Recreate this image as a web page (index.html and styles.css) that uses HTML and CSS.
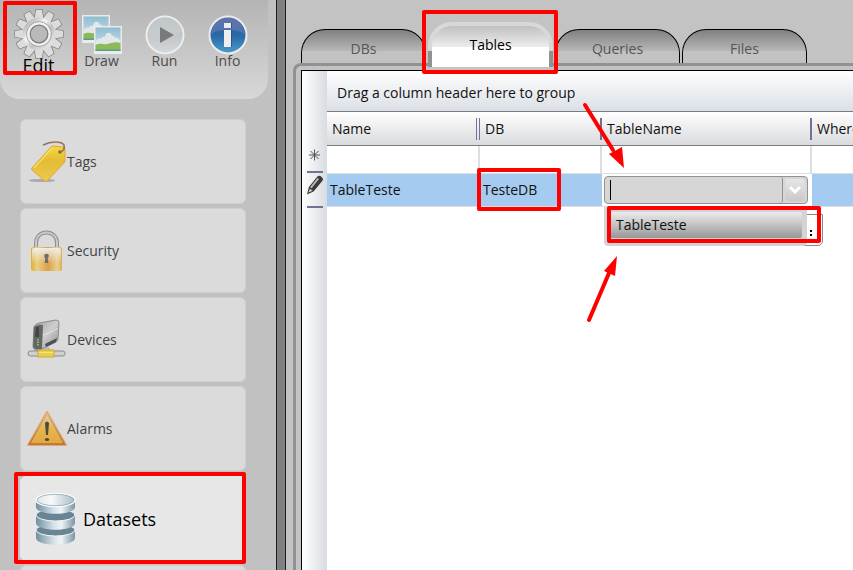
FILE: index.html
```html
<!DOCTYPE html>
<html lang="en">
<head>
  <meta charset="UTF-8" />
  <meta name="viewport" content="width=device-width, initial-scale=1.0" />
  <title>Datasets - Tables</title>
  <link rel="stylesheet" href="styles.css">
</head>
<body>
  <aside class="sidebar">
    <div class="toolbar">
      <button class="tool active">
        <svg width="50" height="50" viewBox="-25 -25 50 50" aria-hidden="true">
          <defs>
            <linearGradient id="metal" x1="0" y1="0" x2="1" y2="1">
              <stop offset="0" stop-color="#b5b5b5" />
              <stop offset=".35" stop-color="#f4f4f4" />
              <stop offset=".6" stop-color="#c2c2c2" />
              <stop offset="1" stop-color="#e6e6e6" />
            </linearGradient>
            <path id="tooth" d="M-4.4 -15 L-3 -24.2 H3 L4.4 -15 Z" />
            <g id="teeth">
              <use href="#tooth" /><use href="#tooth" transform="rotate(30)" />
              <use href="#tooth" transform="rotate(60)" /><use href="#tooth" transform="rotate(90)" />
              <use href="#tooth" transform="rotate(120)" /><use href="#tooth" transform="rotate(150)" />
              <use href="#tooth" transform="rotate(180)" /><use href="#tooth" transform="rotate(210)" />
              <use href="#tooth" transform="rotate(240)" /><use href="#tooth" transform="rotate(270)" />
              <use href="#tooth" transform="rotate(300)" /><use href="#tooth" transform="rotate(330)" />
            </g>
          </defs>
          <use href="#teeth" fill="#d8d8d8" stroke="#7c7c7c" stroke-width="1.4" />
          <circle r="12" fill="none" stroke="#7c7c7c" stroke-width="9.6" />
          <use href="#teeth" fill="#dcdcdc" />
          <circle r="12" fill="none" stroke="url(#metal)" stroke-width="8.4" />
          <circle r="12.4" fill="none" stroke="#a5a5a5" stroke-width="1" />
          <circle r="10.6" fill="none" stroke="#f1f1f1" stroke-width="2" />
          <circle r="8.8" fill="#b9b9b9" stroke="#7c7c7c" stroke-width="1.2" />
        </svg>
        <span class="tool-label">Edit</span>
        <span class="mark mark-edit"></span>
      </button>
      <button class="tool">
        <svg width="40" height="40" viewBox="0 0 40 40" aria-hidden="true">
          <defs>
            <linearGradient id="sky" x1="0" y1="0" x2="0" y2="1">
              <stop offset="0" stop-color="#8fbcd2" />
              <stop offset="1" stop-color="#d3e5ec" />
            </linearGradient>
            <g id="photo">
              <path fill="#ebebeb" d="M0 0H28V28H0Z" />
              <path fill="url(#sky)" d="M1.5 1.5H26.5V25H1.5Z" />
              <path fill="#e2e7ea" d="M2 15c1-3 4-3 5-2 1-3 3-2 4-2 0-5 6-6 7-1 2-1 3 1 3 2 2-1 4 0 5 3v4H2Z" />
              <path fill="#8cba58" d="M1.5 19c4-3 9 0 12-1s8-3 13-1v8h-25Z" />
              <path fill="#55a08a" d="M1.5 23.5h25v1.5h-25Z" />
            </g>
          </defs>
          <use href="#photo" />
          <use href="#photo" x="12" y="11" />
        </svg>
        <span class="tool-label">Draw</span>
      </button>
      <button class="tool">
        <svg width="40" height="40" viewBox="0 0 40 40" aria-hidden="true">
          <defs>
            <linearGradient id="silver" x1="0" y1="0" x2="0" y2="1">
              <stop offset="0" stop-color="#aeb4b9" />
              <stop offset="1" stop-color="#d5d8da" />
            </linearGradient>
          </defs>
          <circle cx="20" cy="20" r="18.5" fill="url(#silver)" stroke="#ececec" stroke-width="2" />
          <path d="M3 18C8 25 31 26 37 15C36 8 29 3 20 3S4 9 3 18Z" fill="#c9cdd0" opacity=".7" />
          <path d="M15 12L29 20L15 28Z" fill="#777b7e" />
        </svg>
        <span class="tool-label">Run</span>
      </button>
      <button class="tool">
        <svg width="40" height="40" viewBox="0 0 40 40" aria-hidden="true">
          <defs>
            <linearGradient id="blue" x1="0" y1="0" x2="0" y2="1">
              <stop offset="0" stop-color="#5560a0" />
              <stop offset=".5" stop-color="#2868a6" />
              <stop offset="1" stop-color="#4b9dcb" />
            </linearGradient>
          </defs>
          <circle cx="20" cy="20" r="18.5" fill="url(#blue)" stroke="#ececec" stroke-width="2" />
          <path d="M3 20C8 13 31 13 37 20C36 9 29 3 20 3S4 9 3 20Z" fill="#8194c4" opacity=".35" />
          <path d="M17 8h7v5h-7ZM17 15h7v17h-7Z" fill="#3e4a92" />
          <path d="M16 8h7v5h-7ZM16 15h7v17h-7Z" fill="#eeeeee" />
        </svg>
        <span class="tool-label">Info</span>
      </button>
    </div>

    <nav class="menu">
      <a class="menu-item" href="#tags">
        <svg width="40" height="42" viewBox="0 0 40 42" aria-hidden="true">
          <defs>
            <linearGradient id="tagFill" x1="0" y1="0" x2="0" y2="1">
              <stop offset="0" stop-color="#f0dc3a" />
              <stop offset=".4" stop-color="#e6bc35" />
              <stop offset="1" stop-color="#eacb4c" />
            </linearGradient>
          </defs>
          <ellipse cx="15" cy="39.5" rx="13" ry="1.6" fill="#aaaaaa" />
          <path d="M5 27L24 6Q25 5 27 5L35 6Q38 6 38 8V19Q38 21 37 22L20 40Q19 41 18 40L5 29Q4 28 5 27Z" fill="url(#tagFill)" stroke="#e9a23b" />
          <path d="M7 27L25 7" stroke="#f4e06a" stroke-width="1.2" />
          <circle cx="33" cy="11" r="1.8" fill="#8a6030" />
          <path d="M16 4C24 0 34 0 37 4C38 8 37 10 33 11" fill="none" stroke="#94745e" stroke-width="1.6" />
        </svg>
        Tags
      </a>
      <a class="menu-item" href="#security">
        <svg width="40" height="42" viewBox="0 0 40 42" aria-hidden="true">
          <defs>
            <linearGradient id="gold" x1="0" y1="0" x2="1" y2="0">
              <stop offset="0" stop-color="#e2b036" />
              <stop offset=".2" stop-color="#ebcf82" />
              <stop offset=".55" stop-color="#dda04a" />
              <stop offset=".85" stop-color="#e9cf90" />
              <stop offset="1" stop-color="#dcae49" />
            </linearGradient>
            <linearGradient id="shine" x1="0" y1="0" x2="0" y2="1">
              <stop offset="0" stop-color="#eeeeea" />
              <stop offset="1" stop-color="#eeeeea" stop-opacity="0" />
            </linearGradient>
          </defs>
          <path d="M9 20V13C9 -1 30 -1 30 13V20" fill="none" stroke="#8f8f8f" stroke-width="4" />
          <path d="M9 20V13C9 -1 30 -1 30 13V20" fill="none" stroke="#c9c9c9" stroke-width="2" />
          <rect x="4" y="17" width="31" height="24" rx="2" fill="url(#gold)" />
          <rect x="5" y="18" width="29" height="15" rx="2" fill="url(#shine)" />
          <circle cx="19.5" cy="26" r="2.3" fill="#6d6d6d" />
          <path d="M18.5 26h2l.8 7h-3.6Z" fill="#6d6d6d" />
        </svg>
        Security
      </a>
      <a class="menu-item" href="#devices">
        <svg width="40" height="42" viewBox="0 0 40 42" aria-hidden="true">
          <defs>
            <linearGradient id="steel" x1="0" y1="0" x2="1" y2="1">
              <stop offset="0" stop-color="#9b9b9b" />
              <stop offset=".5" stop-color="#cecece" />
              <stop offset="1" stop-color="#8a8a8a" />
            </linearGradient>
          </defs>
          <path d="M7 8Q8 5 12 4L29 1Q32 1 32 4L31 20Q31 22 29 23L15 30Q7 33 6 28Z" fill="url(#steel)" stroke="#8d8d8d" />
          <path d="M7 8Q11 5 16 6L15 30Q7 32 6 27Z" fill="#666666" />
          <path d="M9 8h3v10H8Z" fill="#444444" />
          <path d="M16 16Q24 14 31 9" stroke="#e2e2e2" fill="none" />
          <path d="M18 25L30 19L29 23L19 28Z" fill="#505050" />
          <path d="M11 20v7" stroke="#63cf4f" stroke-width="2" stroke-dasharray="1.5 1" />
          <path d="M17 29h5v4h-5Z" fill="#cccccc" stroke="#999999" stroke-width=".6" />
          <rect x="1" y="32" width="37" height="5" rx="2.5" fill="#cfcfcf" stroke="#8b8b8b" />
          <rect x="11" y="31" width="16" height="7" fill="#e9cf45" stroke="#d0a93a" />
          <path d="M12 33.5h14" stroke="#f3e48a" />
        </svg>
        Devices
      </a>
      <a class="menu-item" href="#alarms">
        <svg width="40" height="42" viewBox="0 0 40 42" aria-hidden="true">
          <defs>
            <linearGradient id="amber" x1="0" y1="0" x2="0" y2="1">
              <stop offset="0" stop-color="#e6cfa8" />
              <stop offset=".5" stop-color="#e4b74f" />
              <stop offset="1" stop-color="#e2a83c" />
            </linearGradient>
            <linearGradient id="rust" x1="0" y1="0" x2="0" y2="1">
              <stop offset="0" stop-color="#dcb09a" />
              <stop offset="1" stop-color="#b06a40" />
            </linearGradient>
          </defs>
          <path d="M20 4L39 37H1Z" fill="url(#amber)" stroke="#e2a860" stroke-width="2" stroke-linejoin="round" />
          <path d="M20 5.5L37.5 36H2.5Z" fill="none" stroke="url(#rust)" stroke-width="1.3" />
          <path d="M18 15Q20 12 22 15L21 27H19Z" fill="#4e4a3c" />
          <ellipse cx="20" cy="31.5" rx="2.2" ry="1.6" fill="#4e4a3c" />
        </svg>
        Alarms
      </a>
      <a class="menu-item selected" href="#datasets">
        <svg width="42" height="54" viewBox="0 0 42 54" aria-hidden="true">
          <defs>
            <linearGradient id="drum" x1="0" y1="0" x2="1" y2="0">
              <stop offset="0" stop-color="#6f8fa2" />
              <stop offset=".45" stop-color="#d5e1e8" />
              <stop offset=".65" stop-color="#eef4f7" />
              <stop offset="1" stop-color="#7896a8" />
            </linearGradient>
            <linearGradient id="lid" x1="0" y1="0" x2="1" y2="0">
              <stop offset="0" stop-color="#dfe7ec" />
              <stop offset=".4" stop-color="#f6f9fa" />
              <stop offset="1" stop-color="#a7bac6" />
            </linearGradient>
          </defs>
          <path d="M1 38V46C1 55 40 55 40 46V38Z" fill="url(#drum)" />
          <ellipse cx="20.5" cy="38" rx="19.5" ry="6" fill="#6b8494" stroke="#f2f6f8" />
          <path d="M1 23V31C1 40 40 40 40 31V23Z" fill="url(#drum)" />
          <ellipse cx="20.5" cy="23" rx="19.5" ry="6" fill="#6b8494" stroke="#f2f6f8" />
          <path d="M1 8V15C1 24 40 24 40 15V8Z" fill="url(#drum)" />
          <ellipse cx="20.5" cy="8" rx="19.5" ry="6.5" fill="url(#lid)" stroke="#ffffff" stroke-width="1.5" />
          <ellipse cx="20.5" cy="8" rx="18.5" ry="5.7" fill="none" stroke="#8299a7" stroke-width=".7" />
        </svg>
        Datasets
        <span class="mark mark-datasets"></span>
      </a>
      <a class="menu-item" href="#more" aria-label="More"></a>
    </nav>
  </aside>

  <div class="splitter"></div>

  <main class="main">
    <div class="tabs" role="tablist">
      <button class="tab" role="tab">DBs</button>
      <button class="tab active" role="tab" aria-selected="true">Tables<span class="mark mark-tab"></span></button>
      <button class="tab" role="tab">Queries</button>
      <button class="tab" role="tab">Files</button>
    </div>

    <div class="frame">
      <div class="panel">
        <!-- row state icons -->
        <div class="indicators">
          <svg class="new-row" width="15" height="15" viewBox="0 0 15 15" aria-hidden="true">
            <path d="M7.5 1.5v11M2 7h11M3.5 3l8 8M11.5 3l-8 8" stroke="#555555" />
          </svg>
          <svg class="edit-row" width="17" height="20" viewBox="0 0 17 20" aria-hidden="true">
            <path d="M0 20L2 12L11 1Q14 -1 16 2Q18 4 16 6L7 17Z" fill="#3a3a3a" />
            <path d="M4 13L12 3" stroke="#b5b5b5" stroke-width="2" />
            <path d="M1.5 18L3 14L6 16Z" fill="#cfcfcf" />
          </svg>
        </div>

        <div class="grid">
          <div class="group-bar">Drag a column header here to group</div>
          <table class="rows">
            <colgroup>
              <col class="col-name"><col class="col-db"><col class="col-table"><col class="col-where">
            </colgroup>
            <thead>
              <tr>
                <th class="double"><span>Name</span></th>
                <th><span>DB</span></th>
                <th><span>TableName</span></th>
                <th><span>Where</span></th>
              </tr>
            </thead>
            <tbody>
              <tr class="blank"><td></td><td></td><td></td><td></td></tr>
              <tr class="current">
                <td>TableTeste</td>
                <td>TesteDB<span class="mark mark-db"></span></td>
                <td class="editing">
                  <div class="combo">
                    <input class="combo-input" type="text" aria-label="TableName">
                    <span class="caret"></span>
                    <button class="combo-button" aria-label="Open list">
                      <svg width="14" height="10" viewBox="0 0 14 10" aria-hidden="true">
                        <path d="M2 2L7 7L12 2" fill="none" stroke="#ffffff" stroke-width="3" />
                      </svg>
                    </button>
                  </div>
                  <div class="resizer"></div>
                  <ul class="popup" role="listbox">
                    <li class="option" role="option" aria-selected="true">TableTeste</li>
                  </ul>
                  <span class="mark mark-option"></span>
                  <svg class="arrows" width="50" height="230" viewBox="0 0 50 230" aria-hidden="true">
                    <g stroke="#ff0000" fill="#ff0000" stroke-width="4" stroke-linecap="round">
                      <path d="M5 5L33 50" />
                      <path d="M44 68L29 54L42 47Z" stroke="none" />
                      <path d="M9 220L29 173" />
                      <path d="M37 156L24 171L35 176Z" stroke="none" />
                    </g>
                  </svg>
                </td>
                <td></td>
              </tr>
            </tbody>
          </table>
        </div>
      </div>
    </div>
  </main>
</body>
</html>
```

FILE: styles.css
```css
* {
  box-sizing: border-box;
}

body {
  display: flex;
  height: 100vh;
  margin: 0;
  overflow: hidden;
  background-color: #c3c3c3;
  color: #111;
  font-family: "Open Sans", "Noto Sans", sans-serif;
  font-size: 14px;
  line-height: 20px;
}

button, input {
  font: inherit;
  color: inherit;
  border: none;
  padding: 0;
  margin: 0;
  background: none;
}

/* red callouts */
.mark {
  position: absolute;
  border: 4px solid #f00;
  border-radius: 2px;
  pointer-events: none;
  z-index: 5;
}

/* sidebar */
.sidebar {
  flex: 0 0 276px;
  overflow: hidden;
  background-color: #c1c1c1;
}

.toolbar {
  display: flex;
  width: 268px;
  height: 99px;
  padding-left: 7px;
  border-radius: 0 0 20px 20px;
  background: linear-gradient(#b4b4b4, #d8d8d8);
}

.tool {
  position: relative;
  display: flex;
  flex-direction: column;
  align-items: center;
  width: 63px;
  height: 76px;
  padding-top: 15px;
  color: #4a4a4a;
}

.tool-label {
  margin-top: -4px;
}

.tool.active {
  padding-top: 9px;
  color: #000;
  font-size: 18px;
}

.mark-edit {
  top: 1px;
  left: -4px;
  width: 74px;
  height: 74px;
}

.menu {
  display: flex;
  flex-direction: column;
  gap: 4px;
  padding: 20px 30px 0 20px;
}

.menu-item {
  position: relative;
  display: flex;
  flex-shrink: 0;
  align-items: center;
  height: 85px;
  padding-left: 6px;
  border: 1px solid #cfcfcf;
  border-radius: 6px;
  background-color: #dbdbdb;
  color: #444;
  text-decoration: none;
}

.menu-item.selected {
  gap: 6px;
  margin-top: 1px;
  padding-left: 14px;
  border-color: #e7e7e7;
  background-color: #e7e7e7;
  color: #000;
  font-size: 18px;
}

.mark-datasets {
  top: -5px;
  left: -7px;
  right: -1px;
  bottom: -4px;
}

.splitter {
  flex: 0 0 10px;
  border: 1px solid #1e1e1e;
  border-width: 0 1px;
  background-color: #808080;
}

/* tabs */
.main {
  flex: 1;
  min-width: 0;
  display: flex;
  flex-direction: column;
  padding-left: 7px;
}

.tabs {
  display: flex;
  align-items: flex-end;
  gap: 2px;
  height: 63px;
  padding-left: 8px;
}

.tab {
  position: relative;
  width: 125px;
  height: 34px;
  padding-top: 4px;
  border: 1px solid #000;
  border-bottom: none;
  border-radius: 24px 24px 0 0;
  background: linear-gradient(#808080, #b8b8b8 64%, #c2c2c2 64%);
  color: #555;
}

.tab.active {
  z-index: 2;
  height: 45px;
  margin-bottom: -4px;
  padding: 0 0 4px;
  border: 4px solid transparent;
  border-bottom: none;
  background: linear-gradient(#c0c0c0, #ececec 50%, #fff 50%) padding-box,
    linear-gradient(#d8d8d8 65%, #919191 65%) border-box;
  color: #000;
}

.mark-tab {
  top: -16px;
  left: -10px;
  width: 136px;
  height: 64px;
}

.frame {
  flex: 1;
  padding: 4px 0 0 5px;
  border: 3px solid #919191;
  border-width: 3px 0 0 3px;
  border-radius: 8px 0 0 0;
}

/* data grid */
.panel {
  display: flex;
  height: 100%;
  border: 1px solid #000;
  border-width: 1px 0 0 1px;
  background-color: #fff;
}

.indicators {
  flex: 0 0 25px;
  padding: 77px 4px 0 5px;
  background: linear-gradient(to right, #fff, #f0f1f3 40%, #d8dbe0);
}

.indicators svg {
  display: block;
}

.edit-row {
  box-sizing: content-box;
  width: 16px;
  margin-top: 8px;
  padding: 2px 0 11px;
  border: 2px solid #747096;
  border-width: 2px 0;
}

.grid {
  flex: 1;
  min-width: 0;
  overflow: hidden;
}

.group-bar {
  height: 41px;
  padding: 12px 10px 0;
  border-bottom: 1px solid #777b82;
  background: linear-gradient(#fff, #eef0f3 45%, #dbdfe6);
}

.rows {
  width: 695px;
  table-layout: fixed;
  border-collapse: separate;
  border-spacing: 0;
}

.col-name { width: 153px; }
.col-db { width: 122px; }
.col-table { width: 210px; }
.col-where { width: 210px; }

.rows th {
  height: 34px;
  padding: 1px 0 0;
  border-bottom: 1px solid #777b82;
  background: linear-gradient(#fff, #d9dadd);
  font-weight: normal;
  text-align: left;
}

.rows th span {
  display: block;
  height: 22px;
  padding-left: 5px;
  border-right: 2px solid #747096;
  line-height: 22px;
}

.rows th.double span {
  border-right: 4px double #747096;
}

.rows td {
  position: relative;
  height: 33px;
  padding: 0 3px;
  border-bottom: 1px solid #dcdee2;
}

.rows .blank td {
  height: 28px;
  border-right: 2px solid #dcdee2;
}

.rows .current td {
  background-color: #a6cbf0;
}

.rows .current .editing {
  padding: 0 4px 0 2px;
  background-color: #fff;
}

.mark-db {
  top: -6px;
  left: -3px;
  width: 84px;
  height: 43px;
}

.combo {
  position: relative;
  display: flex;
  height: 28px;
  border: 1px solid #929292;
  border-radius: 4px;
  background-color: #d6d6d6;
}

.combo-input {
  flex: 1;
  min-width: 0;
  padding-left: 6px;
  border-right: 1px solid #929292;
  border-radius: 0 3px 3px 0;
  outline: none;
}

.caret {
  position: absolute;
  top: 3px;
  left: 5px;
  width: 1px;
  height: 20px;
  background-color: #000;
}

.combo-button {
  display: flex;
  align-items: center;
  justify-content: center;
  width: 20px;
  margin: 2px;
  border-radius: 4px;
  background: linear-gradient(#e6e6e6, #c9c9c9);
}

/* drop-down list */
.popup {
  position: absolute;
  top: 33px;
  left: 2px;
  width: 203px;
  margin: 0;
  padding: 5px 5px 8px 6px;
  border-radius: 0 0 4px 4px;
  background-color: #d4d4d4;
  list-style: none;
}

.option {
  height: 26px;
  padding-left: 6px;
  border-radius: 2px;
  background: linear-gradient(#ececec, #989898);
  line-height: 26px;
}

.resizer {
  position: absolute;
  top: 40px;
  left: 179px;
  width: 42px;
  height: 32px;
  border: 1px solid #888;
  border-radius: 0 0 5px 0;
  background: radial-gradient(circle at 29px 16px, #000 1px, transparent 1px),
    radial-gradient(circle at 29px 20px, #000 1px, transparent 1px), #fff;
}

.mark-option {
  top: 32px;
  left: 5px;
  width: 214px;
  height: 37px;
}

.arrows {
  position: absolute;
  top: -74px;
  left: -22px;
  z-index: 6;
  pointer-events: none;
}
```
